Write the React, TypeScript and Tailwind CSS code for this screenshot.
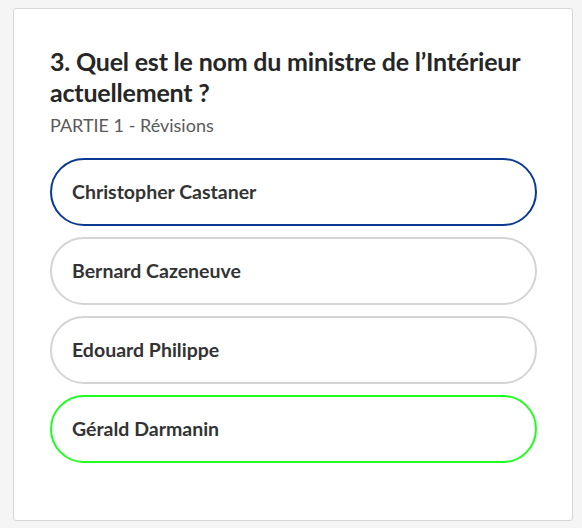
import React from 'react';

const options = [
  { label: 'Christopher Castaner', state: 'selected' },
  { label: 'Bernard Cazeneuve', state: 'idle' },
  { label: 'Edouard Philippe', state: 'idle' },
  { label: 'Gérald Darmanin', state: 'correct' },
];

export default function App() {
  return (
    <div className="min-h-[528px] bg-[#f5f5f5] pl-[13px] pt-[8px] pb-[6px]" style={{ fontFamily: 'Lato, "Noto Sans", sans-serif' }}>
      <div className="w-[560px] bg-white border border-[#d6d6d6] rounded-[3px] pl-[36px] pr-[35px] pt-[37px] pb-[57px]">
        <h1 className="text-[25px] leading-[31px] font-bold text-[#262626] tracking-[-0.2px]">
          3. Quel est le nom du ministre de l’Intérieur actuellement ?
        </h1>
        <p className="mt-[5px] text-[18px] leading-[24px] text-[#595959]">PARTIE 1 - Révisions</p>
        <div className="mt-[21px] flex flex-col gap-[11px]">
          {options.map((o) => (
            <button
              key={o.label}
              className={`h-[68px] w-full rounded-full border-2 bg-white px-[20px] text-left text-[19.5px] font-bold text-[#333333] ${
                o.state === 'selected'
                  ? 'border-[#0b3a93]'
                  : o.state === 'correct'
                  ? 'border-[#1fff1f]'
                  : 'border-[#d4d4d4]'
              }`}
            >
              {o.label}
            </button>
          ))}
        </div>
      </div>
    </div>
  );
}
